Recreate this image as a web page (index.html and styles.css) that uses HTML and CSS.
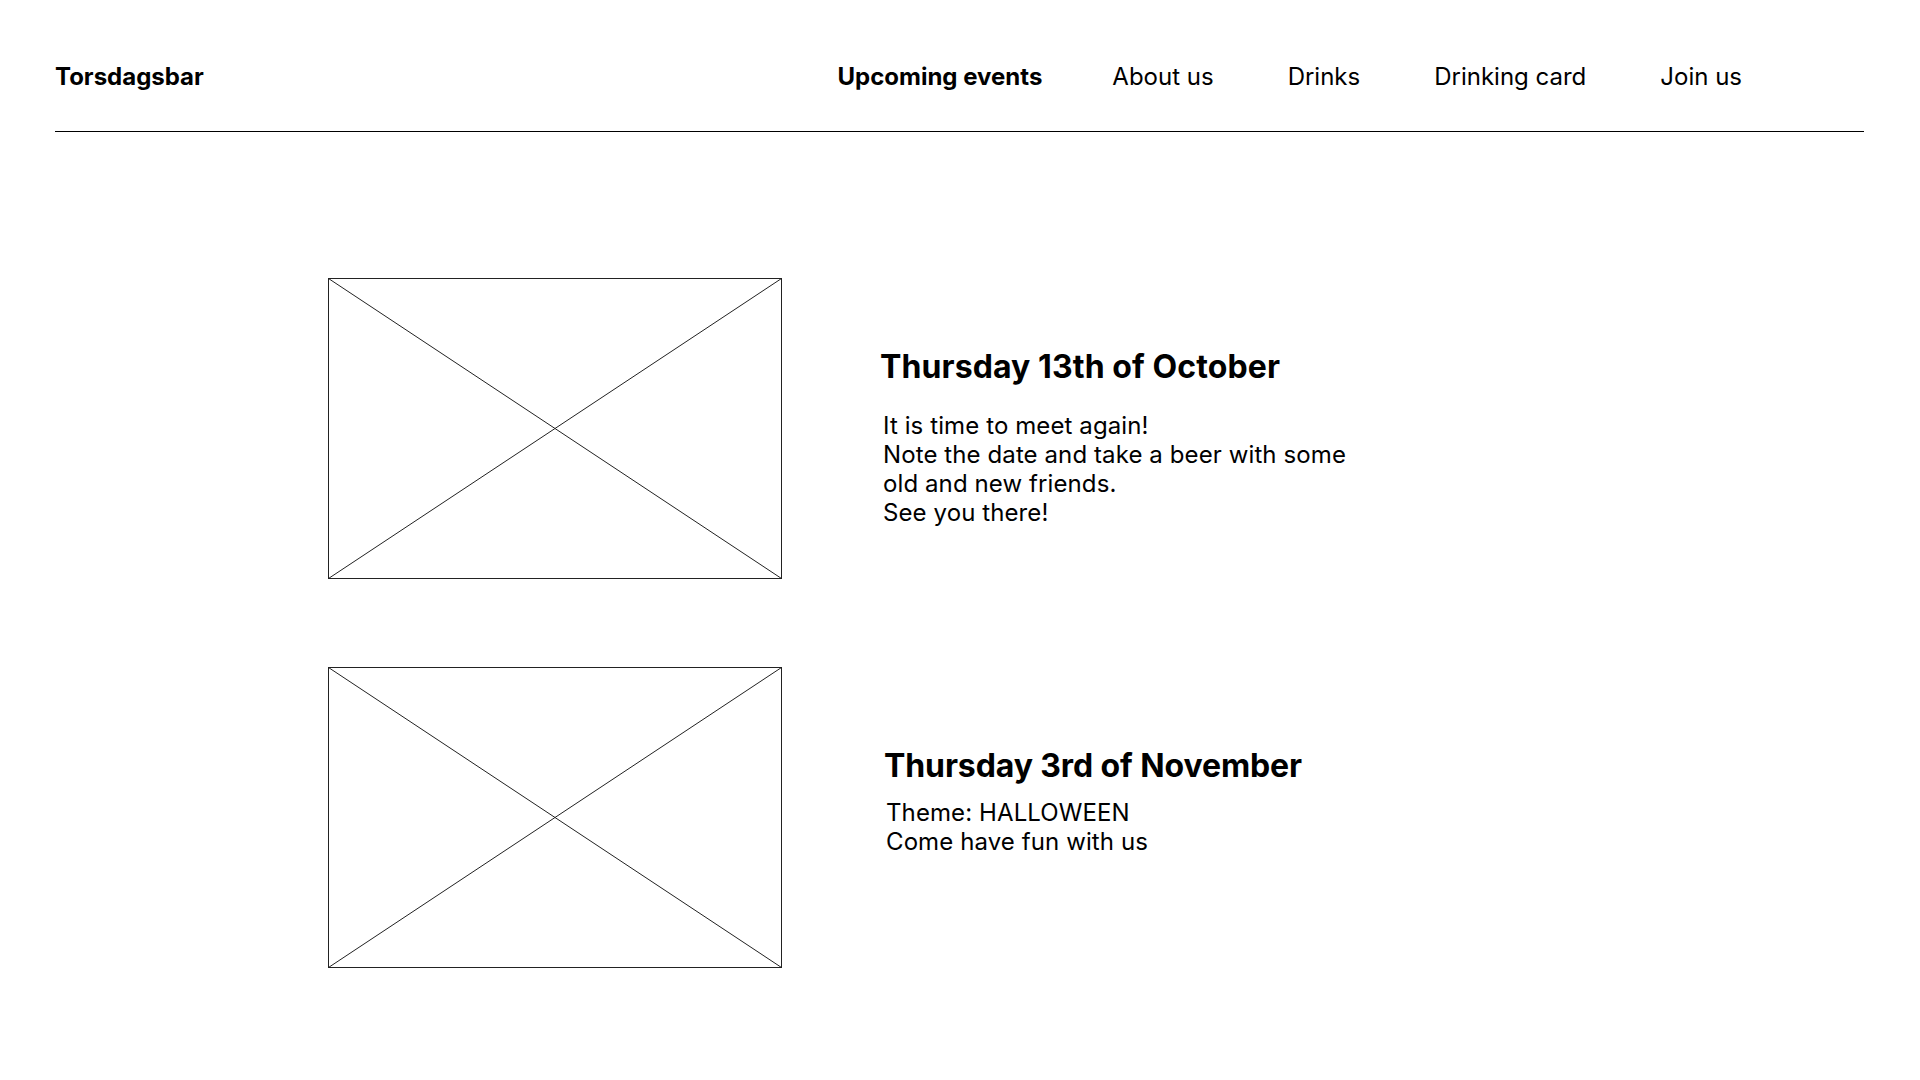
FILE: index.html
```html
<!DOCTYPE html>
<html lang="en">
<head>
<meta charset="utf-8">
<title>Torsdagsbar</title>
<link rel="stylesheet" href="styles.css">
</head>
<body>
<header class="site-header">
  <div class="logo">Torsdagsbar</div>
  <nav class="nav">
    <a class="nav-link active" href="#">Upcoming events</a>
    <a class="nav-link" href="#">About us</a>
    <a class="nav-link" href="#">Drinks</a>
    <a class="nav-link" href="#">Drinking card</a>
    <a class="nav-link" href="#">Join us</a>
  </nav>
</header>
<main class="events">
  <article class="event event-one">
    <svg class="placeholder" width="454" height="301" viewBox="0 0 454 301">
      <rect x="0.5" y="0.5" width="453" height="300" fill="none" stroke="#222" stroke-width="1"/>
      <line x1="0.5" y1="0.5" x2="453.5" y2="300.5" stroke="#222" stroke-width="1"/>
      <line x1="453.5" y1="0.5" x2="0.5" y2="300.5" stroke="#222" stroke-width="1"/>
    </svg>
    <div class="event-text">
      <h2 class="event-title">Thursday 13th of October</h2>
      <p class="event-body">It is time to meet again!<br>Note the date and take a beer with some<br>old and new friends.<br>See you there!</p>
    </div>
  </article>
  <article class="event event-two">
    <svg class="placeholder" width="454" height="301" viewBox="0 0 454 301">
      <rect x="0.5" y="0.5" width="453" height="300" fill="none" stroke="#222" stroke-width="1"/>
      <line x1="0.5" y1="0.5" x2="453.5" y2="300.5" stroke="#222" stroke-width="1"/>
      <line x1="453.5" y1="0.5" x2="0.5" y2="300.5" stroke="#222" stroke-width="1"/>
    </svg>
    <div class="event-text">
      <h2 class="event-title">Thursday 3rd of November</h2>
      <p class="event-body">Theme: HALLOWEEN<br>Come have fun with us</p>
    </div>
  </article>
</main>
</body>
</html>
```
FILE: styles.css
```css
* { box-sizing: border-box; }
html, body { margin: 0; padding: 0; background: #fff; }
body {
  font-family: Inter, "Noto Sans", sans-serif;
  color: #000;
  width: 1920px;
  height: 1080px;
  overflow: hidden;
}
.site-header {
  margin: 0 56px 0 55px;
  padding: 62px 122px 40px 0;
  border-bottom: 1px solid #000;
  display: flex;
  justify-content: space-between;
  align-items: center;
  line-height: 29px;
  font-size: 24px;
}
.logo { font-weight: 700; }
.nav { display: flex; gap: 74px; }
.nav-link { color: #000; text-decoration: none; font-weight: 400; }
.nav-link.active { font-weight: 700; margin-right: -4px; }
.events {
  padding: 146px 0 0 328px;
  display: flex;
  flex-direction: column;
  gap: 88px;
}
.event { display: flex; align-items: flex-start; }
.placeholder { display: block; flex: none; }
.event-text { margin-left: 98px; }
.event-title {
  margin: 0;
  font-size: 32px;
  font-weight: 700;
  line-height: 38px;
  letter-spacing: 0.1px;
}
.event-body {
  margin: 0;
  font-size: 24px;
  line-height: 29px;
  font-weight: 400;
  letter-spacing: 0.1px;
}
.event-one .event-text { padding-top: 70px; }
.event-one .event-body { margin-top: 25px; padding-left: 3px; }
.event-two .event-text { padding-top: 80px; margin-left: 102px; }
.event-two .event-title { letter-spacing: -0.1px; }
.event-two .event-body { margin-top: 13px; padding-left: 2px; }
```
